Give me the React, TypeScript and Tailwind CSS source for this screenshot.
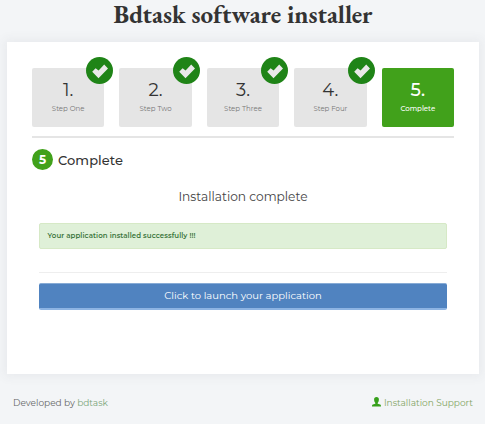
const steps = [
  { number: '1.', label: 'Step One' },
  { number: '2.', label: 'Step Two' },
  { number: '3.', label: 'Step Three' },
  { number: '4.', label: 'Step Four' },
];

function CheckBadge() {
  return (
    <span className="absolute -right-[8.5px] -top-[11px] flex size-[27px] items-center justify-center rounded-full bg-[#1f8417]">
      <svg viewBox="0 0 27 27" className="size-[27px]" fill="#e9e9e9">
        <path d="M6.2 14.8 9.6 11.3 12.6 13.4 18.2 7.6 22 11.6 12.5 21.3Z" />
      </svg>
    </span>
  );
}

function UserIcon() {
  return (
    <svg viewBox="0 0 9 10" className="mb-[2px] mr-[3px] h-[10px] w-[9px]" fill="#36a01b">
      <path d="M4.5 0C2.9 0 2 1 2.1 2.7c.1 1.5.6 2.5 1.2 3.2v.8L.8 7.6C.3 7.9 0 8.3 0 9.5h9c0-1.2-.3-1.6-.8-1.9L5.7 6.7v-.8c.6-.7 1.1-1.7 1.2-3.2C7 1 6.1 0 4.5 0Z" />
    </svg>
  );
}

export default function App() {
  return (
    <div className="h-[424px] w-[485px] bg-[#f3f5f7] font-['Montserrat',Inter,sans-serif] text-[#444]">
      <h1 className="h-[42px] whitespace-nowrap pl-px text-center font-['EB_Garamond','Liberation_Serif',serif] text-[25px] font-bold leading-[28px] text-[#333]">
        Bdtask software installer
      </h1>
      <main className="ml-[7px] h-[332px] w-[472px] bg-white px-[25px] pt-[25.5px] shadow-[0_0_10px_3px_rgba(60,65,90,0.06)]">
        <ol className="grid h-[59px] grid-cols-5 gap-[15px]">
          {steps.map((step) => (
            <li key={step.number} className="relative rounded-[2px] bg-[#e5e5e5] pt-[11px] text-center">
              <div className="text-[18px] leading-[22px] text-[#333]">{step.number}</div>
              <div className="mt-[3px] whitespace-nowrap text-[7px] leading-[10px] text-[#777]">{step.label}</div>
              <CheckBadge />
            </li>
          ))}
          <li className="rounded-[2px] bg-[#41a11b] pt-[11px] text-center text-white">
            <div className="text-[18px] font-medium leading-[22px]">5.</div>
            <div className="mt-[3px] text-[7px] font-medium leading-[10px]">Complete</div>
          </li>
        </ol>
        <div className="mt-[9.5px] h-[2px] bg-[#e5e5e5]" />
        <h2 className="mt-[11px] flex h-[21px] items-center text-[13px] font-medium text-[#333]">
          <span className="mr-[5px] flex size-[21px] items-center justify-center rounded-full bg-[#41a11b] text-[12px] font-bold text-white">
            5
          </span>
          <span className="pt-[2px] tracking-[0.05px]">Complete</span>
        </h2>
        <section className="mx-[7px]">
          <p className="mt-[18px] text-center text-[12.2px] leading-[18px]">Installation complete</p>
          <div className="mt-[16.5px] h-[26px] rounded-[2px] border border-[#d6e9c6] bg-[#dff0d8] pl-[7.5px] text-[7px] font-semibold leading-[24px] tracking-[0.08px] text-[#3c763d]">
            Your application installed successfully !!!
          </div>
          <div className="mt-[23.5px] h-px bg-[#eee]" />
          <button className="mt-[10px] block h-[27px] w-full rounded-[2px] border-b-2 border-t border-b-[#8db4e3] border-t-[#87abd5] bg-[#5083c0] text-[10px] leading-[24px] text-white">
            Click to launch your application
          </button>
        </section>
      </main>
      <footer className="flex items-center justify-between pl-[13px] pr-[12px] pt-[20.5px] text-[9px] leading-[16px] text-[#666]">
        <p>
          Developed by <a className="text-[#7ba57a]">bdtask</a>
        </p>
        <a className="flex items-center text-[#84a566]">
          <UserIcon />
          Installation Support
        </a>
      </footer>
    </div>
  );
}
